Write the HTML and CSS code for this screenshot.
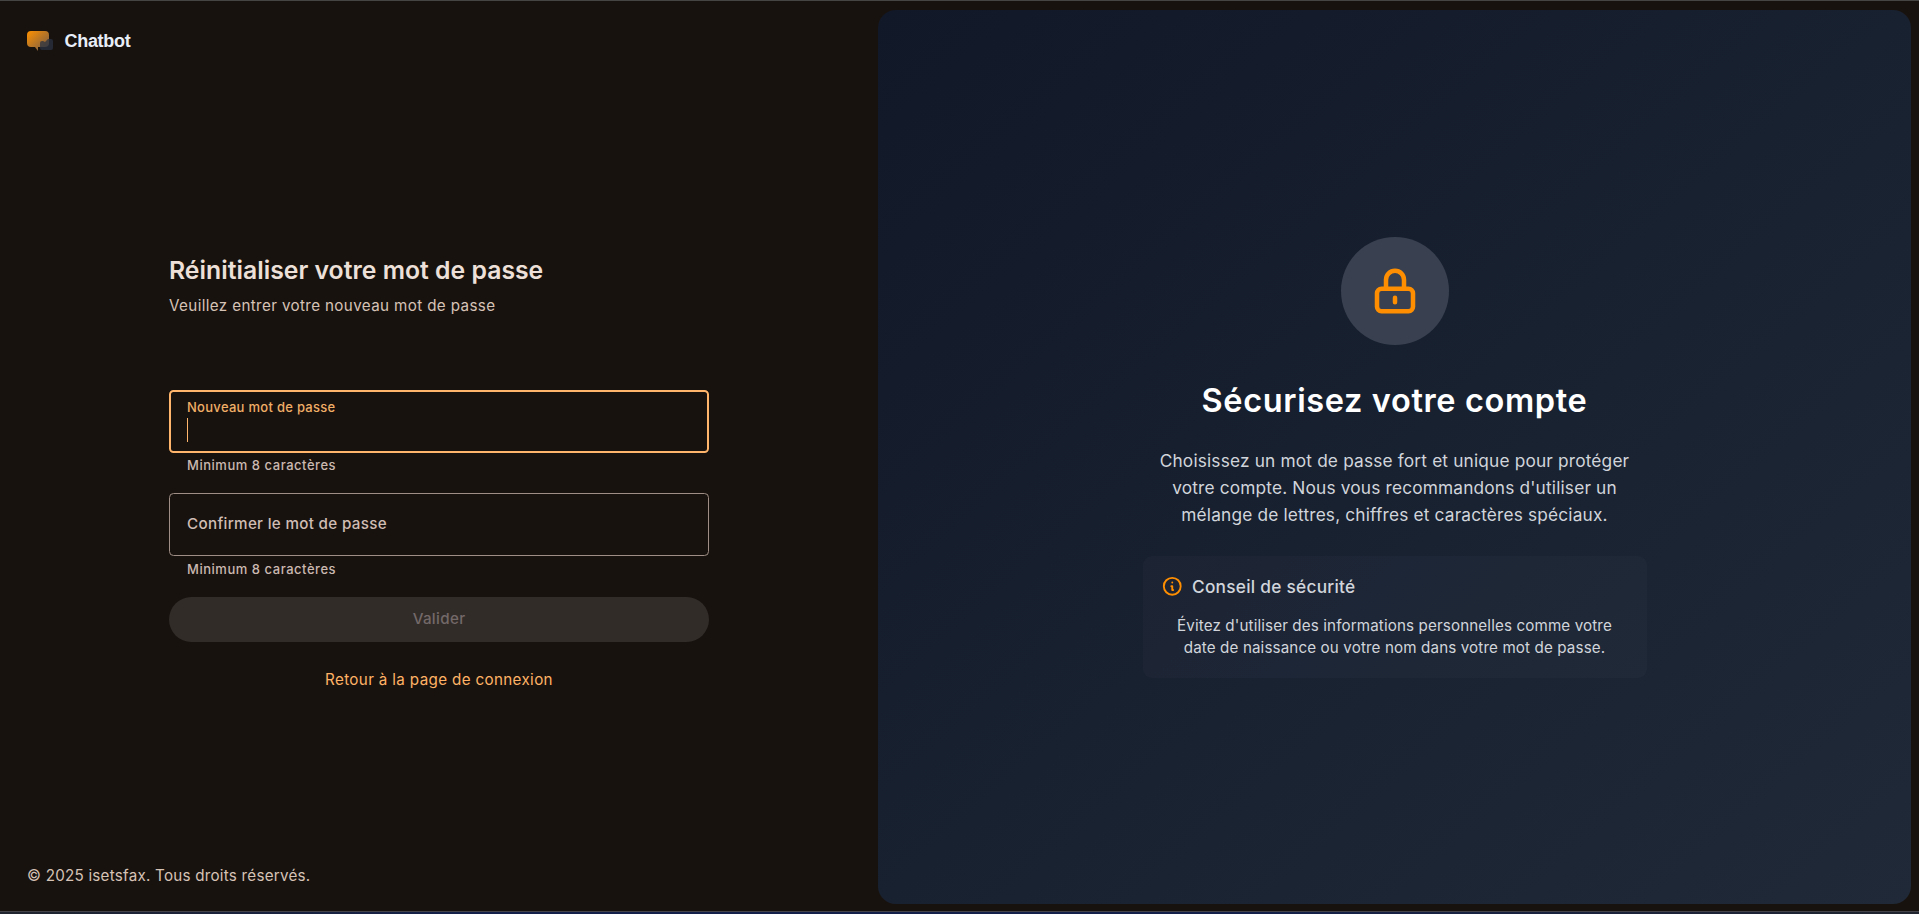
FILE: index.html
```html
<!DOCTYPE html>
<html lang="fr">
<head>
<meta charset="utf-8">
<title>Chatbot</title>
<link rel="stylesheet" href="styles.css">
</head>
<body>
<div class="page">
  <section class="left">
    <header class="brand">
      <svg class="logo" width="27" height="21" viewBox="0 0 27 21">
        <defs>
          <linearGradient id="bubble" x1="0" y1="0" x2="1" y2="1">
            <stop offset="0" stop-color="#ff9100"/>
            <stop offset="1" stop-color="#6f5a4c"/>
          </linearGradient>
        </defs>
        <path d="M4 0h14a4 4 0 0 1 4 4v8a4 4 0 0 1-4 4h-7v4l-3-4H4a4 4 0 0 1-4-4V4a4 4 0 0 1 4-4z" fill="url(#bubble)"/>
        <path d="M16 10l2 1 3-3h3a2 2 0 0 1 2 2v7a2 2 0 0 1-2 2h-9a2 2 0 0 1-2-2v-5a2 2 0 0 1 2-2z" fill="#293241" fill-opacity=".75"/>
      </svg>
      <span class="brand-name">Chatbot</span>
    </header>
    <main class="form">
      <h1 class="title">Réinitialiser votre mot de passe</h1>
      <p class="subtitle">Veuillez entrer votre nouveau mot de passe</p>
      <div class="field field-active">
        <span class="float-label">Nouveau mot de passe</span>
        <span class="caret"></span>
      </div>
      <p class="hint hint-first">Minimum 8 caractères</p>
      <div class="field">
        <span class="label">Confirmer le mot de passe</span>
      </div>
      <p class="hint">Minimum 8 caractères</p>
      <button class="submit" disabled>Valider</button>
      <a class="back">Retour à la page de connexion</a>
    </main>
    <footer class="footer">© 2025 isetsfax. Tous droits réservés.</footer>
  </section>
  <aside class="panel">
    <div class="badge">
      <svg width="54" height="54" viewBox="0 0 24 24" fill="none" stroke="#ff8f00" stroke-width="2" stroke-linecap="round" stroke-linejoin="round">
        <path d="M12 15v2m-6 4h12a2 2 0 002-2v-6a2 2 0 00-2-2H6a2 2 0 00-2 2v6a2 2 0 002 2zm10-10V7a4 4 0 00-8 0v4h8z"/>
      </svg>
    </div>
    <h2 class="panel-title">Sécurisez votre compte</h2>
    <p class="panel-text">Choisissez un mot de passe fort et unique pour protéger<br>votre compte. Nous vous recommandons d'utiliser un<br>mélange de lettres, chiffres et caractères spéciaux.</p>
    <div class="tip">
      <div class="tip-head">
        <svg width="22.5" height="22.5" viewBox="0 0 24 24" fill="none" stroke="#ff8f00" stroke-width="2" stroke-linecap="round" stroke-linejoin="round">
          <path d="M13 16h-1v-4h-1m1-4h.01M21 12a9 9 0 11-18 0 9 9 0 0118 0z"/>
        </svg>
        <h3 class="tip-title">Conseil de sécurité</h3>
      </div>
      <p class="tip-text">Évitez d'utiliser des informations personnelles comme votre<br>date de naissance ou votre nom dans votre mot de passe.</p>
    </div>
  </aside>
</div>
</body>
</html>
```
FILE: styles.css
```css
* { box-sizing: border-box; margin: 0; padding: 0; }

body {
  background: #18120f;
  font-family: Inter, "Liberation Sans", sans-serif;
  color: #ede0d9;
}

.page {
  display: flex;
  height: 914px;
  padding: 9px 8px 10px 0;
  border-top: 1px solid #454543;
  position: relative;
}

.page::after {
  content: "";
  position: absolute;
  left: 0;
  right: 0;
  bottom: 0;
  height: 2px;
  border-top: 1px solid #45434a;
  background: linear-gradient(90deg, #20242e, #13204a 25%, #13204a 65%, #20242e);
}

.left {
  width: 878px;
  display: flex;
  flex-direction: column;
}

.brand {
  display: flex;
  align-items: center;
  gap: 10.5px;
  height: 24px;
  margin: 19px 0 0 27px;
}

.logo { display: block; margin-top: 1px; }

.brand-name {
  font: 700 18px/24px "Liberation Sans", Arial, sans-serif;
  letter-spacing: -0.3px;
  color: #e8eef7;
}

.form {
  width: 540px;
  margin: 199px 0 0 169px;
  display: flex;
  flex-direction: column;
}

.title { font-size: 24.75px; line-height: 36px; font-weight: 600; letter-spacing: .02px; }

.subtitle {
  margin: 7px 0 72.5px;
  font-size: 15.2px;
  line-height: 22.5px;
  letter-spacing: .37px;
  color: #d6c3b6;
}

.field {
  height: 63px;
  padding: 0 17px;
  border: 1px solid #9e8e85;
  border-radius: 4.5px;
  display: flex;
  flex-direction: column;
  justify-content: center;
}

.field-active {
  border: 2px solid #ffb56b;
  padding: 6px 16px;
  justify-content: flex-start;
}

.float-label {
  font-size: 13px;
  line-height: 18px;
  font-weight: 500;
  letter-spacing: .288px;
  color: #f0ae66;
}

.caret { width: 1px; height: 24px; margin-top: 2px; background: #ffb56b; }

.label {
  font-size: 15.2px;
  line-height: 22px;
  font-weight: 500;
  letter-spacing: .32px;
  color: #d0bdb4;
  margin-top: -2px;
}

.hint {
  height: 41px;
  padding: 4px 18px 0;
  font-size: 13px;
  line-height: 18px;
  font-weight: 500;
  letter-spacing: .53px;
  color: #cbb9b1;
}

.hint-first { height: 40px; padding-top: 3px; }

.submit {
  height: 45px;
  border: 0;
  border-radius: 22.5px;
  padding-bottom: 2px;
  background: #322c29;
  font: 500 15.2px/43px Inter, sans-serif;
  letter-spacing: .327px;
  color: #736968;
}

.back {
  margin-top: 27px;
  text-align: center;
  font-size: 15.2px;
  line-height: 22.5px;
  letter-spacing: .35px;
  color: #ffb265;
}

.footer {
  margin: auto 0 17px 27px;
  font-size: 15.2px;
  line-height: 22.5px;
  letter-spacing: .24px;
  color: #d6c3b6;
}

.panel {
  flex: 1;
  border-radius: 18px;
  background: linear-gradient(to bottom right, #111827, #182130 50%, #1f2937);
  display: flex;
  flex-direction: column;
  align-items: center;
  padding-top: 227px;
  text-align: center;
}

.badge {
  width: 108px;
  height: 108px;
  border-radius: 50%;
  background: #394150;
  display: flex;
  align-items: center;
  justify-content: center;
}

.panel-title {
  margin-top: 36px;
  font-size: 32.5px;
  line-height: 40px;
  font-weight: 600;
  letter-spacing: .63px;
  color: #fff;
}

.panel-text {
  margin-top: 26px;
  font-size: 17.3px;
  line-height: 27px;
  letter-spacing: .165px;
  color: #d1d5db;
}

.tip {
  width: 504px;
  height: 122px;
  margin-top: 28px;
  padding: 17px 18px;
  border-radius: 9px;
  background: rgba(55, 65, 81, .16);
}

.tip-head { display: flex; align-items: center; gap: 9px; height: 27px; }

.tip-title {
  font-size: 17.3px;
  line-height: 27px;
  font-weight: 500;
  letter-spacing: .249px;
  color: #d1d5db;
}

.tip-text {
  margin-top: 14.5px;
  font-size: 15.2px;
  line-height: 22.5px;
  letter-spacing: .12px;
  color: #d1d5db;
}
```
